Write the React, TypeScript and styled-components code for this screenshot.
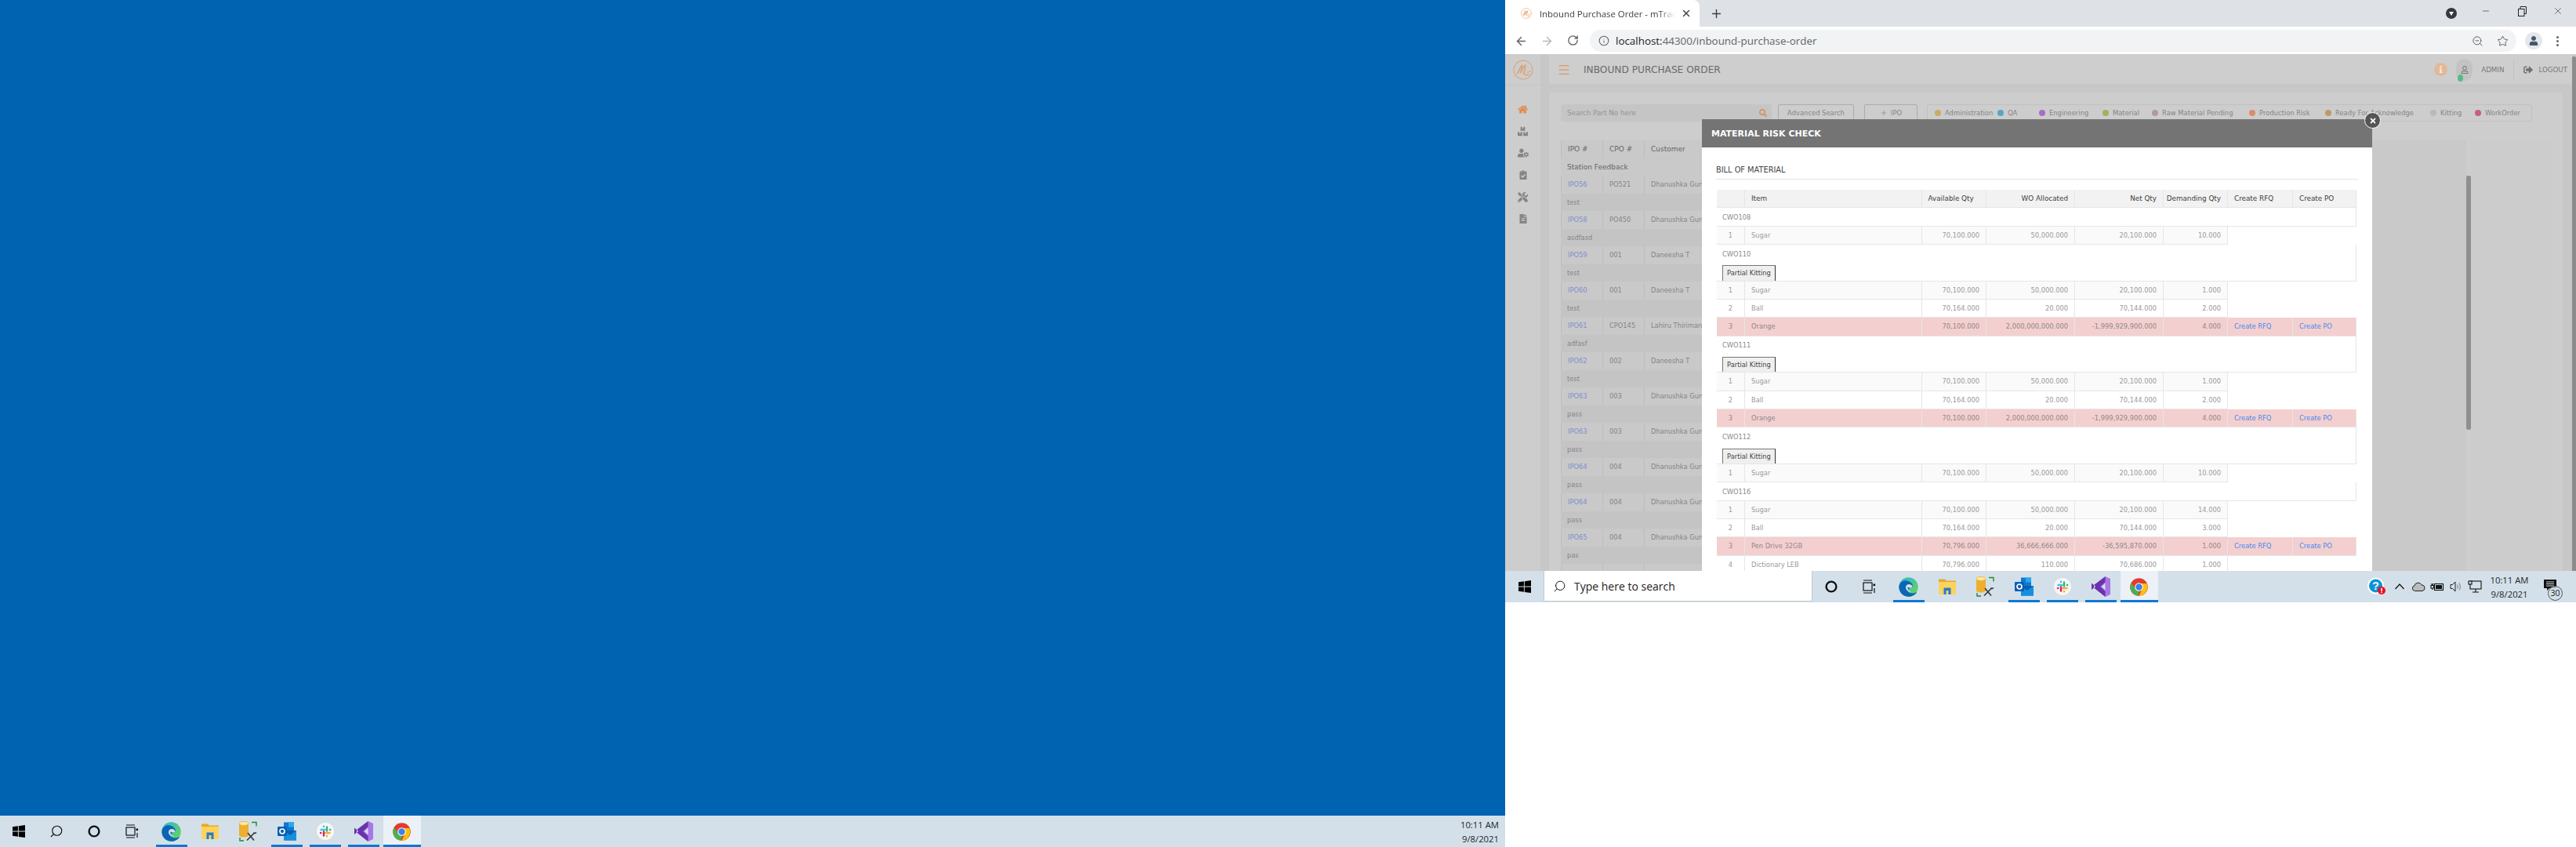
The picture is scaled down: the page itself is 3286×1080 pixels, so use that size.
import React from 'react';
import styled, { createGlobalStyle } from 'styled-components';
import { ArrowLeft, ArrowRight, RotateCw, Info, ZoomOut, Star, Plus, X, Minus, Search, Menu } from 'lucide-react';
import {
    FaHome, FaBoxes, FaUserCog, FaClipboardCheck, FaTools, FaFileAlt,
    FaSearch, FaSignOutAlt, FaRegUser, FaInfo, FaUser, FaTimes,
} from 'react-icons/fa';

const PAGE_FONT = '"DejaVu Sans", Verdana, sans-serif';
const UI_FONT = '"Open Sans", "Noto Sans", sans-serif';

const GlobalStyle = createGlobalStyle`
    html, body {
        margin: 0;
        padding: 0;
        background: #fff;
        overflow: hidden;
    }
    * { box-sizing: border-box; }
`;

const Screen = styled.div`
    display: flex;
    width: 3286px;
    height: 1080px;
    overflow: hidden;
`;

const Desktop = styled.div`
    width: 1920px;
    height: 1080px;
    display: flex;
    flex-direction: column;
    flex: none;
`;

const Wallpaper = styled.div`
    flex: 1;
    background: #0063b1;
`;

const Laptop = styled.div`
    width: 1366px;
    height: 768px;
    display: flex;
    flex-direction: column;
    flex: none;
`;

/* taskbar */
const Taskbar = styled.div`
    height: 40px;
    flex: none;
    display: flex;
    align-items: stretch;
    background: #d3e0ea;
    font-family: ${UI_FONT};
    color: #1a1a1a;
`;

const SystemSlot = styled.div`
    width: 48px;
    flex: none;
    display: flex;
    align-items: center;
    justify-content: center;
`;

const StartSlot = styled(SystemSlot)`
    width: 49px;
`;

const TaskSearch = styled.div`
    width: 343px;
    height: 39px;
    flex: none;
    display: flex;
    align-items: center;
    gap: 10px;
    padding-left: 11px;
    background: #fff;
    border: 1px solid #c4c9cd;
    border-top: 0;
    font-size: 14px;
    color: #222;
`;

const AppSlot = styled.div<{ $active?: boolean; $wide?: boolean }>`
    width: ${p => (p.$wide ? '48px' : '40px')};
    margin: 0 ${p => (p.$wide ? '0.5px' : '4.5px')};
    flex: none;
    display: flex;
    align-items: center;
    justify-content: center;
    border-bottom: 3px solid ${p => (p.$active ? '#0f78d4' : 'transparent')};
    background: ${p => (p.$wide ? '#ebf1f6' : 'transparent')};
    padding-top: 3px;
`;

const AppsStart = styled.div`
    width: 2px;
    flex: none;
`;

const Spring = styled.div`
    flex: 1;
`;

const Tray = styled.div`
    display: flex;
    align-items: center;
    margin-right: 15px;
`;

const TrayIcon = styled.div<{ $gap?: number }>`
    width: 24px;
    height: 24px;
    margin-right: ${p => p.$gap ?? 0}px;
    display: flex;
    align-items: center;
    justify-content: center;
`;

const Clock = styled.div`
    width: 64px;
    display: flex;
    flex-direction: column;
    align-items: center;
    justify-content: center;
    gap: 3px;
    font-size: 11.3px;
    line-height: 15px;
    color: #1f1f1f;
`;

const LeftClock = styled(Clock)`
    margin-right: 8px;
    align-items: flex-end;
`;

const NotifyWrap = styled.div`
    width: 36px;
    position: relative;
    display: flex;
    align-items: center;
    justify-content: center;
    margin-left: 2px;
    padding-bottom: 4px;
`;

const NotifyBadge = styled.span`
    position: absolute;
    left: 15px;
    top: 8px;
    width: 19px;
    height: 19px;
    border-radius: 50%;
    border: 1px solid #555;
    background: #d3e0eacc;
    font-size: 10.5px;
    line-height: 17px;
    text-align: center;
`;

/* chrome */
const TabStrip = styled.div`
    height: 34px;
    flex: none;
    display: flex;
    align-items: center;
    background: #dee1e6;
    font-family: ${UI_FONT};
`;

const Tab = styled.div`
    width: 248px;
    height: 34px;
    flex: none;
    display: flex;
    align-items: center;
    padding: 0 10px 0 20px;
    background: #fff;
    border-top-right-radius: 8px;
`;

const TabTitle = styled.span`
    width: 174px;
    margin-left: 10px;
    font-size: 11.4px;
    color: #3c4043;
    white-space: nowrap;
    overflow: hidden;
    -webkit-mask-image: linear-gradient(90deg, #000 88%, transparent);
    mask-image: linear-gradient(90deg, #000 88%, transparent);
`;

const TabClose = styled.div`
    margin-left: 7px;
    display: flex;
`;

const NewTab = styled.div`
    margin-left: 12.5px;
    display: flex;
`;

const WindowControls = styled.div`
    margin-left: auto;
    display: flex;
    align-items: center;
`;

const Extension = styled.div`
    width: 14px;
    height: 14px;
    border-radius: 50%;
    background: #35393f;
    margin-right: 14px;
    display: flex;
    align-items: center;
    justify-content: center;
`;

const WindowButton = styled.div`
    width: 46px;
    display: flex;
    justify-content: center;
    color: #222;
    margin-top: -6px;
`;

const Toolbar = styled.div`
    height: 36px;
    flex: none;
    display: flex;
    align-items: center;
    background: #fff;
    border-bottom: 1px solid #ccc;
    padding-top: 1px;
    font-family: ${UI_FONT};
`;

const NavIcon = styled.div<{ $muted?: boolean }>`
    width: 33px;
    display: flex;
    justify-content: center;
    color: ${p => (p.$muted ? '#b5b7ba' : '#5f6368')};
`;

const NavGroup = styled.div`
    width: 108px;
    flex: none;
    display: flex;
    padding-left: 4px;
`;

const Omnibox = styled.div`
    width: 1182px;
    height: 28px;
    flex: none;
    display: flex;
    align-items: center;
    padding: 0 10px 0 11px;
    background: #f1f3f4;
    border-radius: 14px;
    font-size: 13.4px;
    color: #202124;
`;

const UrlHost = styled.span`
    margin-left: 8px;
    color: #202124;
`;

const UrlRest = styled.span`
    color: #5f6368;
`;

const OmniActions = styled.div`
    margin-left: auto;
    display: flex;
    gap: 17px;
    color: #5f6368;
`;

const Avatar = styled.div`
    width: 22px;
    height: 22px;
    margin-left: 11px;
    border-radius: 50%;
    background: #e4e7eb;
    color: #47566e;
    display: flex;
    align-items: center;
    justify-content: center;
`;

const DotsMenu = styled.div`
    margin-left: 18px;
    display: flex;
    flex-direction: column;
    gap: 2px;
`;

const Dot = styled.span`
    width: 3px;
    height: 3px;
    border-radius: 50%;
    background: #5f6368;
`;

/* app page, dimmed by the modal */
const Page = styled.div`
    flex: 1;
    min-height: 0;
    position: relative;
    display: flex;
    background: #c7c7c7;
    font-family: ${PAGE_FONT};
    overflow: hidden;
`;

const Rail = styled.div`
    width: 45px;
    flex: none;
    display: flex;
    flex-direction: column;
    align-items: center;
    background: #cdcdcd;
`;

const RailLogo = styled.div`
    width: 100%;
    height: 39px;
    display: flex;
    align-items: center;
    justify-content: center;
    border-bottom: 1px solid #c5c5c5;
`;

const RailIcons = styled.div`
    display: flex;
    flex-direction: column;
    align-items: center;
    gap: 15.5px;
    margin-top: 24px;
    color: #888;
`;

const RailIcon = styled.div<{ $active?: boolean }>`
    height: 12.5px;
    display: flex;
    align-items: center;
    color: ${p => (p.$active ? '#df8a4e' : '#858585')};
`;

const Content = styled.div`
    width: 1305px;
    margin-left: 11px;
    flex: none;
    display: flex;
    flex-direction: column;
    gap: 11px;
`;

const AppBar = styled.div`
    height: 37px;
    flex: none;
    display: flex;
    align-items: center;
    padding: 0 6px 0 10px;
    background: #cecece;
    border-radius: 0 0 3px 3px;
    width: 1305px;
`;

const Burger = styled.div`
    display: flex;
    color: #df8a4e;
`;

const AppTitle = styled.div`
    margin-left: 16px;
    font-size: 12.2px;
    color: #6a6a6a;
`;

const AppBarRight = styled.div`
    margin-left: auto;
    display: flex;
    align-items: center;
`;

const InfoBadge = styled.div`
    width: 17px;
    height: 17px;
    border-radius: 50%;
    background: #e2b997;
    color: #f4eee8;
    display: flex;
    align-items: center;
    justify-content: center;
`;

const UserBadge = styled.div`
    width: 21px;
    height: 28px;
    margin-left: 11px;
    border-radius: 11px;
    background: #c3c3c3;
    color: #737373;
    position: relative;
    display: flex;
    align-items: center;
    justify-content: center;
`;

const OnlineDot = styled.span`
    position: absolute;
    left: 2px;
    bottom: -1px;
    width: 7px;
    height: 9px;
    border-radius: 50%;
    background: #55bb85;
`;

const BarLabel = styled.span`
    font-size: 8.7px;
    color: #787878;
`;

const AdminLabel = styled(BarLabel)`
    margin-left: 11px;
`;

const BarDivider = styled.div`
    width: 1px;
    height: 28px;
    margin: 0 12px;
    background: #c2c2c2;
`;

const LogoutIcon = styled.div`
    display: flex;
    margin-right: 7px;
    color: #727272;
`;

const Card = styled.div`
    flex: 1;
    min-height: 0;
    display: flex;
    flex-direction: column;
    padding: 15px 12px 0 15px;
    background: #cdcdcd;
    margin-right: 12px;
    border-radius: 3px 3px 0 0;
`;

const PageScroll = styled.div`
    width: 5px;
    margin: 2px 0 0 auto;
    flex: none;
    background: #8c8c8c;
    border-radius: 2px 2px 0 0;
`;

const FilterRow = styled.div`
    height: 22px;
    flex: none;
    display: flex;
    gap: 8px;
    font-size: 8.4px;
    color: #858585;
`;

const SearchField = styled.div`
    width: 269px;
    display: flex;
    align-items: center;
    justify-content: space-between;
    padding: 0 6px 0 8px;
    background: #c5c5c5;
    border-radius: 3px;
    color: #949494;
    font-size: 8.8px;
`;

const SearchGlyph = styled.span`
    display: flex;
    color: #dc8d55;
`;

const OutlineButton = styled.div<{ $width: number; $gap: number }>`
    width: ${p => p.$width}px;
    margin-left: ${p => p.$gap}px;
    display: flex;
    align-items: center;
    justify-content: center;
    gap: 4px;
    border: 1px solid #ababab;
    border-radius: 2px;
`;

const Legend = styled.div`
    width: 772px;
    margin-left: 4px;
    display: flex;
    align-items: center;
    padding-left: 9px;
    border: 1px solid #c0c0c0;
    border-radius: 3px;
    white-space: nowrap;
`;

const LegendItem = styled.div<{ $width: number }>`
    width: ${p => p.$width}px;
    flex: none;
    display: flex;
    align-items: center;
    gap: 5px;
`;

const LegendDot = styled.span<{ $color: string }>`
    width: 8px;
    height: 8px;
    border-radius: 50%;
    background: ${p => p.$color};
`;

const TableFrame = styled.div`
    flex: 1;
    min-height: 0;
    margin-top: 24px;
    display: flex;
`;

const TableArea = styled.div`
    width: 1155px;
    flex: none;
    display: flex;
    flex-direction: column;
    overflow: hidden;
    background: #c9c9c9;
    font-size: 8.3px;
`;

const ThumbTrack = styled.div`
    width: 6px;
    flex: none;
    padding-top: 45px;
`;

const Thumb = styled.div`
    height: 324px;
    border-radius: 2px;
    background: #8f8f8f;
`;

const SidePane = styled.div`
    width: 105px;
    flex: none;
    background: #cccccc;
`;

const PoLine = styled.div<{ $head?: boolean; $dark?: boolean }>`
    display: flex;
    flex: none;
    align-items: center;
    width: 400px;
    height: 22.5px;
    background: ${p => (p.$dark ? '#c4c4c4' : '#c9c9c9')};
    color: ${p => (p.$head ? '#666' : '#858585')};
    font-size: ${p => (p.$head ? '9px' : '8.3px')};
`;

const PoCell = styled.div<{ $width: number; $link?: boolean }>`
    width: ${p => p.$width}px;
    height: 100%;
    flex: none;
    display: flex;
    align-items: center;
    padding-left: 8px;
    border-left: 1px solid #bdbdbd;
    white-space: nowrap;
    overflow: hidden;
    color: ${p => (p.$link ? '#7d90cc' : 'inherit')};
`;

const PoNote = styled.div`
    padding-left: 8px;
`;

/* modal */
const Modal = styled.div`
    position: absolute;
    left: 251px;
    top: 82px;
    bottom: 0;
    width: 855px;
    display: flex;
    flex-direction: column;
    background: #fff;
`;

const ModalHead = styled.div`
    height: 36px;
    flex: none;
    display: flex;
    align-items: center;
    padding-left: 12px;
    background: #747474;
    color: #fff;
    font-size: 11px;
    font-weight: 700;
`;

const ModalClose = styled.div`
    position: absolute;
    right: -11px;
    top: -9px;
    width: 21px;
    height: 21px;
    border-radius: 50%;
    border: 1.5px solid #fff;
    background: #555;
    color: #fff;
    display: flex;
    align-items: center;
    justify-content: center;
`;

const ModalBody = styled.div`
    flex: 1;
    min-height: 0;
    overflow: hidden;
    padding: 17px 18px 0;
`;

const SectionTitle = styled.div`
    height: 24px;
    margin-bottom: 13px;
    display: flex;
    align-items: center;
    border-bottom: 1px solid #e4e4e4;
    font-size: 9.8px;
    color: #444;
`;

const BomGrid = styled.div`
    margin-left: 1px;
    width: 816px;
`;

const BomRow = styled.div`
    display: grid;
    grid-template-columns: 36px 225.5px 82.5px 113px 113px 82px 83px 81px;
    height: 23.33px;
`;

const BomCell = styled.div<{ $right?: boolean; $center?: boolean; $head?: boolean; $pink?: boolean; $odd?: boolean }>`
    display: flex;
    align-items: center;
    justify-content: ${p => (p.$center ? 'center' : p.$right ? 'flex-end' : 'flex-start')};
    padding: 0 8px;
    font-size: ${p => (p.$head ? '8.8px' : '8.3px')};
    white-space: nowrap;
    border-right: 1px solid #e6e6e6;
    border-bottom: 1px solid #e6e6e6;
    color: ${p => (p.$head ? '#3d3d3d' : p.$pink ? '#8f8a8a' : '#9a9a9a')};
    background: ${p => (p.$head ? '#f2f2f2' : p.$pink ? '#f4cfcf' : p.$odd ? '#fafafa' : '#fff')};
`;

const BomLink = styled(BomCell)`
    color: #3f8cf0;
`;

const GroupRow = styled.div<{ $kitting?: boolean }>`
    height: ${p => (p.$kitting ? '46.67px' : '23.33px')};
    overflow: hidden;
    padding-left: 7px;
    border-right: 1px solid #e6e6e6;
    border-bottom: 1px solid #e6e6e6;
    color: #8a8a8a;
    font-size: 8.3px;
`;

const GroupName = styled.div`
    height: 23.33px;
    display: flex;
    align-items: center;
`;

const KittingButton = styled.button`
    display: block;
    width: 68px;
    height: 24px;
    margin-top: 3px;
    padding: 0 0 4px;
    background: #efefef;
    border: 1px solid #555;
    border-left-color: #777;
    border-top-color: #777;
    border-right: 1.5px solid #333;
    color: #444;
    font-family: ${PAGE_FONT};
    font-size: 8.3px;
`;

/* icons */
const WinLogo = ({ size = 16 }: { size?: number }) => (
    <svg width={size} height={size} viewBox="0 0 16 16">
        <path fill="#000" d="M0 2.3 6.9 1.3V7.6H0zM7.8 1.2 16 0V7.6H7.8zM0 8.4H6.9V14.8L0 13.8zM7.8 8.4H16V16L7.8 14.9z" />
    </svg>
);

const CortanaRing = () => (
    <svg width="16" height="16" viewBox="0 0 16 16">
        <circle cx="8" cy="8" r="6.4" fill="none" stroke="#111" strokeWidth="2.4" />
    </svg>
);

const TaskView = () => (
    <svg width="18" height="18" viewBox="0 0 18 18" fill="none" stroke="#111" strokeWidth="1.2">
        <path d="M2 1h11M2 17h11" />
        <rect x="2" y="4" width="11" height="10" />
        <rect x="14.5" y="5.5" width="2.6" height="2.6" fill="#111" stroke="none" />
        <path d="M16 11v6" />
    </svg>
);

const EdgeIcon = () => (
    <svg width="25" height="25" viewBox="0 0 25 25">
        <defs>
            <linearGradient id="edgeTop" x1="0" y1="0" x2="1" y2="1">
                <stop offset="0" stopColor="#2bb7d6" />
                <stop offset="1" stopColor="#6fd64f" />
            </linearGradient>
        </defs>
        <circle cx="12.5" cy="12.5" r="12.2" fill="url(#edgeTop)" />
        <path fill="#0b65b5" d="M.4 12.5C1 5.500 7 3.500 11 4.500 17 6 19 11 17.500 13c-2 1-6 1-6.500-.5 4.500 1 1 5 .5 5.500 2 3 8 3.500 12 .5-2 4-6.500 6.300-11 6.300C6 24.800.4 19.500.4 12.500z" />
        <path fill="#d3e0ea" d="M9 13c0-2.500 2-4 4-4 2.500 0 4.500 1.500 4.500 3.500 0 1-3 1.500-6 0-.5 2 1 5 5 6-4 .5-7.500-2-7.500-5.500z" />
    </svg>
);

const FolderIcon = () => (
    <svg width="22" height="20" viewBox="0 0 22 20">
        <path fill="#e8a828" d="M0 1.500A1 1 0 0 1 1 .5h7l2 2h12v3H0z" />
        <path fill="#fbd35e" d="M0 4h22v15a1 1 0 0 1-1 1H1a1 1 0 0 1-1-1z" />
        <path fill="#2b7cc8" d="M6.500 20v-8.500h9V20h-3v-5h-3v5z" />
    </svg>
);

const SqlToolIcon = () => (
    <svg width="24" height="26" viewBox="0 0 24 26" fill="none">
        <path fill="#eeaf2e" d="M0 3v15c0 1.500 2 2.500 6 2.500s6-1 6-2.500V3z" />
        <ellipse cx="6" cy="3" rx="6" ry="2.600" fill="#fce8a6" stroke="#eeaf2e" strokeWidth=".8" />
        <path stroke="#1e8b2c" strokeWidth="1.400" d="M16 1.500h6v5M1 21v4h5" />
        <path stroke="#333" strokeWidth="1.600" d="M10 24.500l9-9M11 15l8 9.500M18.500 14.500c1 1 2.500 1 3.500 0" />
    </svg>
);

const OutlookIcon = () => (
    <svg width="24" height="24" viewBox="0 0 24 24">
        <rect x="8" y="0.500" width="13" height="11" fill="#0f78d4" />
        <rect x="14" y="0.500" width="7" height="6" fill="#28a8ea" />
        <path fill="#0a5fb0" d="M8 11h16v12.500H8z" />
        <path fill="#1490df" d="M8 11l8 6 8-6v12.500H8z" />
        <rect x="0" y="6" width="12" height="12" rx="1" fill="#0a60b4" />
        <circle cx="6" cy="12" r="3" fill="none" stroke="#fff" strokeWidth="1.700" />
    </svg>
);

const SlackIcon = () => (
    <svg width="24" height="24" viewBox="0 0 24 24">
        <circle cx="12" cy="12" r="11.600" fill="#f6f6f6" stroke="#cbd0d4" strokeWidth=".6" />
        <g strokeWidth="2.400" strokeLinecap="round" fill="none">
            <path stroke="#36c5f0" d="M6.500 10h5M10 5.800V6" />
            <path stroke="#2eb67d" d="M14 6.500v5M18 10h.2" />
            <path stroke="#ecb22e" d="M12.500 14h5M14 18v.2" />
            <path stroke="#e01e5a" d="M10 12.500v5M6 14h.2" />
        </g>
    </svg>
);

const VsIcon = () => (
    <svg width="24" height="26" viewBox="0 0 24 26">
        <path fill="#a876e6" d="M17.500 0 24 3v20l-6.500 3L7 14.500z" />
        <path fill="#6a32ae" d="M17.500 0v7L11 13l6.500 6v7L3 14.500 0 17V8.500l3 2.500z" />
        <path fill="#d3e0ea" d="M17.500 8.500v9L12.800 13zM3 10.800V15l2-2.100z" />
    </svg>
);

const ChromeIcon = () => (
    <svg width="23" height="23" viewBox="0 0 48 48">
        <circle cx="24" cy="24" r="23.500" fill="#e33b2e" />
        <path fill="#4caf50" d="M24 47.500A23.500 23.500 0 0 1 3.600 12.300L15 29l9 18.500z" />
        <path fill="#4caf50" d="M3.600 12.300 17 33l10 1-8 13z" />
        <path fill="#ffc107" d="M24 14.500h20.400A23.500 23.500 0 0 1 24 47.500L33 29z" />
        <circle cx="24" cy="24" r="11" fill="#fff" />
        <circle cx="24" cy="24" r="8.800" fill="#3f7fe8" />
    </svg>
);

const MtrackLogo = ({ size, tone }: { size: number; tone: string }) => (
    <svg width={size} height={size} viewBox="0 0 24 24" fill="none" stroke={tone}>
        <circle cx="12" cy="12" r="11" strokeWidth="1" />
        <path strokeWidth="1.500" d="M5 17C7.500 12 9 8 10.500 6.500c.8 2-1 6-2 9.500 2-4 4.500-8.500 6-9.500.8 2-1 6-2 9.500 1 2 3 2.500 6.500 1.500" />
        <path strokeWidth="1" d="M16 14.500c1.500.5 3.500 0 5-1.500" />
    </svg>
);

const TrayHelp = () => (
    <svg width="24" height="24" viewBox="0 0 24 24">
        <circle cx="10.500" cy="11" r="10.500" fill="#fff" />
        <circle cx="10.500" cy="11" r="8.500" fill="#0d93d9" />
        <text x="10.500" y="16" fontSize="14" fontWeight="700" fill="#fff" textAnchor="middle" fontFamily="Liberation Sans, sans-serif">?</text>
        <circle cx="18" cy="17" r="5" fill="#e81123" />
        <rect x="17.200" y="13.800" width="1.600" height="4" fill="#fff" />
        <rect x="17.200" y="18.600" width="1.600" height="1.500" fill="#fff" />
    </svg>
);

const TrayCaret = () => (
    <svg width="14" height="10" viewBox="0 0 14 10" fill="none" stroke="#111" strokeWidth="1.200">
        <path d="M1.500 8 7 2l5.500 6" />
    </svg>
);

const TrayCloud = () => (
    <svg width="18" height="14" viewBox="0 0 18 14">
        <path fill="#bcbcbc" stroke="#222" strokeWidth="1" d="M4.500 12.500a3.400 3.400 0 0 1-.5-6.700 4.800 4.800 0 0 1 9-1 3.900 3.900 0 0 1 1 7.700z" />
    </svg>
);

const TrayPower = () => (
    <svg width="18" height="14" viewBox="0 0 18 14" fill="none" stroke="#111" strokeWidth="1.100">
        <path d="M1 5.500h3.500v3.500H1zM2 5.500V3M3.500 5.500V3M2.700 9v2" />
        <rect x="5.500" y="3.500" width="11" height="8" />
        <rect x="7" y="5" width="8" height="5" fill="#111" stroke="none" />
    </svg>
);

const TraySound = () => (
    <svg width="16" height="16" viewBox="0 0 16 16" fill="none" stroke="#222" strokeWidth="1">
        <path d="M1 5.500h2.500L7 2v12l-3.500-3.500H1z" />
        <path stroke="#777" d="M9.500 5.500c1 1.500 1 3.500 0 5M12 3.500c1.700 2.500 1.700 6.500 0 9" />
    </svg>
);

const TrayNetwork = () => (
    <svg width="18" height="16" viewBox="0 0 18 16" fill="none" stroke="#111" strokeWidth="1.100">
        <rect x="3" y="1" width="14" height="10" />
        <rect x="1" y="1" width="4" height="4" fill="#d3e0ea" />
        <path d="M10 11v3.500M6 15h8" />
    </svg>
);

const NotifyIcon = () => (
    <svg width="16" height="14" viewBox="0 0 16 14">
        <path fill="#111" d="M0 0h16v11H7l-3 3v-3H0z" />
        <path stroke="#d3e0ea" strokeWidth="1" d="M3 3h10M3 5.500h10M3 8h10" />
    </svg>
);

/* data */
const LEGEND = [
    { label: 'Administration', color: '#c8ac66', width: 80 },
    { label: 'QA', color: '#55a5c6', width: 53 },
    { label: 'Engineering', color: '#a96dc4', width: 81 },
    { label: 'Material', color: '#9cb45a', width: 63 },
    { label: 'Raw Material Pending', color: '#b09a9a', width: 124 },
    { label: 'Production Risk', color: '#dc8a6c', width: 97 },
    { label: 'Ready For Acknowledge', color: '#c0996a', width: 134 },
    { label: 'Kitting', color: '#b9b9b9', width: 57 },
    { label: 'WorkOrder', color: '#c65f80', width: 70 },
];

const ORDERS = [
    ['IPO56', 'PO521', 'Dhanushka Gunasekara', 'test'],
    ['IPO58', 'PO450', 'Dhanushka Gunasekara', 'asdfasd'],
    ['IPO59', '001', 'Daneesha T', 'test'],
    ['IPO60', '001', 'Daneesha T', 'test'],
    ['IPO61', 'CPO145', 'Lahiru Thirimanne', 'adfasf'],
    ['IPO62', '002', 'Daneesha T', 'test'],
    ['IPO63', '003', 'Dhanushka Gunasekara', 'pass'],
    ['IPO63', '003', 'Dhanushka Gunasekara', 'pass'],
    ['IPO64', '004', 'Dhanushka Gunasekara', 'pass'],
    ['IPO64', '004', 'Dhanushka Gunasekara', 'pass'],
    ['IPO65', '004', 'Dhanushka Gunasekara', 'pas'],
    ['', '', '', ''],
];

type Line = [string, string, string, string, string, boolean?];
interface Group {
    name: string;
    kitting?: boolean;
    lines: Line[];
}

const SUGAR = (demand: string): Line => ['Sugar', '70,100.000', '50,000.000', '20,100.000', demand];
const BALL = (demand: string): Line => ['Ball', '70,164.000', '20.000', '70,144.000', demand];
const ORANGE: Line = ['Orange', '70,100.000', '2,000,000,000.000', '-1,999,929,900.000', '4.000', true];

const GROUPS: Group[] = [
    { name: 'CWO108', lines: [SUGAR('10.000')] },
    { name: 'CWO110', kitting: true, lines: [SUGAR('1.000'), BALL('2.000'), ORANGE] },
    { name: 'CWO111', kitting: true, lines: [SUGAR('1.000'), BALL('2.000'), ORANGE] },
    { name: 'CWO112', kitting: true, lines: [SUGAR('10.000')] },
    {
        name: 'CWO116',
        lines: [
            SUGAR('14.000'),
            BALL('3.000'),
            ['Pen Drive 32GB', '70,796.000', '36,666,666.000', '-36,595,870.000', '1.000', true],
            ['Dictionary LEB', '70,796.000', '110.000', '70,686.000', '1.000'],
        ],
    },
];

const APPS = [
    { key: 'edge', icon: <EdgeIcon />, active: true },
    { key: 'folder', icon: <FolderIcon /> },
    { key: 'sql', icon: <SqlToolIcon /> },
    { key: 'outlook', icon: <OutlookIcon />, active: true },
    { key: 'slack', icon: <SlackIcon />, active: true },
    { key: 'vs', icon: <VsIcon />, active: true },
];

const TaskApps = () => (
    <>
        <AppsStart />
        {APPS.map(a => (
            <AppSlot key={a.key} $active={a.active}>{a.icon}</AppSlot>
        ))}
        <AppSlot $active $wide><ChromeIcon /></AppSlot>
    </>
);

const BomLineRow = ({ line, index }: { line: Line; index: number }) => {
    const [item, available, allocated, net, demand, risk] = line;
    const odd = index % 2 === 0;
    return (
        <BomRow>
            <BomCell $center $pink={risk} $odd={odd}>{index + 1}</BomCell>
            <BomCell $pink={risk} $odd={odd}>{item}</BomCell>
            <BomCell $right $pink={risk} $odd={odd}>{available}</BomCell>
            <BomCell $right $pink={risk} $odd={odd}>{allocated}</BomCell>
            <BomCell $right $pink={risk} $odd={odd}>{net}</BomCell>
            <BomCell $right $pink={risk} $odd={odd}>{demand}</BomCell>
            {risk && <BomLink $pink>Create RFQ</BomLink>}
            {risk && <BomLink $pink>Create PO</BomLink>}
        </BomRow>
    );
};

export default function App() {
    return (
        <Screen>
            <GlobalStyle />
            <Desktop>
                <Wallpaper />
                <Taskbar>
                    <SystemSlot><WinLogo /></SystemSlot>
                    <SystemSlot><Search size={18} color="#111" strokeWidth={1.5} style={{ transform: 'scaleX(-1)' }} /></SystemSlot>
                    <SystemSlot><CortanaRing /></SystemSlot>
                    <SystemSlot><TaskView /></SystemSlot>
                    <TaskApps />
                    <Spring />
                    <LeftClock>
                        <span>10:11 AM</span>
                        <span>9/8/2021</span>
                    </LeftClock>
                </Taskbar>
            </Desktop>

            <Laptop>
                <TabStrip>
                    <Tab>
                        <MtrackLogo size={14} tone="#e59a5c" />
                        <TabTitle>Inbound Purchase Order - mTrack</TabTitle>
                        <TabClose><X size={14} color="#3c4043" strokeWidth={2.5} /></TabClose>
                    </Tab>
                    <NewTab><Plus size={17} color="#3c4043" strokeWidth={2} /></NewTab>
                    <WindowControls>
                        <Extension>
                            <svg width="6" height="5" viewBox="0 0 6 5"><path fill="#fff" d="M0 0h6L3 5z" /></svg>
                        </Extension>
                        <WindowButton><Minus size={12} strokeWidth={1.2} /></WindowButton>
                        <WindowButton>
                            <svg width="11" height="13" viewBox="0 0 11 13" fill="none" stroke="#222">
                                <rect x=".5" y="3.500" width="7.500" height="9" />
                                <path d="M3 3.500V.5h7.500v9H8" />
                            </svg>
                        </WindowButton>
                        <WindowButton><X size={14} strokeWidth={1} /></WindowButton>
                    </WindowControls>
                </TabStrip>
                <Toolbar>
                    <NavGroup>
                        <NavIcon><ArrowLeft size={17} strokeWidth={2} /></NavIcon>
                        <NavIcon $muted><ArrowRight size={17} strokeWidth={2} /></NavIcon>
                        <NavIcon><RotateCw size={15} strokeWidth={2.2} /></NavIcon>
                    </NavGroup>
                    <Omnibox>
                        <Info size={14} color="#5f6368" strokeWidth={1.8} />
                        <UrlHost>localhost:<UrlRest>44300/inbound-purchase-order</UrlRest></UrlHost>
                        <OmniActions>
                            <ZoomOut size={15} strokeWidth={1.6} />
                            <Star size={15} strokeWidth={1.6} />
                        </OmniActions>
                    </Omnibox>
                    <Avatar><FaUser size={12} /></Avatar>
                    <DotsMenu><Dot /><Dot /><Dot /></DotsMenu>
                </Toolbar>

                <Page>
                    <Rail>
                        <RailLogo><MtrackLogo size={26} tone="#dba57a" /></RailLogo>
                        <RailIcons>
                            <RailIcon $active><FaHome size={13} /></RailIcon>
                            <RailIcon><FaBoxes size={13} /></RailIcon>
                            <RailIcon><FaUserCog size={14} /></RailIcon>
                            <RailIcon><FaClipboardCheck size={12} /></RailIcon>
                            <RailIcon><FaTools size={13} /></RailIcon>
                            <RailIcon><FaFileAlt size={12} /></RailIcon>
                        </RailIcons>
                    </Rail>
                    <Content>
                        <AppBar>
                            <Burger><Menu size={18} strokeWidth={1.5} /></Burger>
                            <AppTitle>INBOUND PURCHASE ORDER</AppTitle>
                            <AppBarRight>
                                <InfoBadge><FaInfo size={9} /></InfoBadge>
                                <UserBadge>
                                    <FaRegUser size={10} />
                                    <OnlineDot />
                                </UserBadge>
                                <AdminLabel>ADMIN</AdminLabel>
                                <BarDivider />
                                <LogoutIcon><FaSignOutAlt size={12} /></LogoutIcon>
                                <BarLabel>LOGOUT</BarLabel>
                            </AppBarRight>
                        </AppBar>
                        <Card>
                            <FilterRow>
                                <SearchField>
                                    <span>Search Part No here</span>
                                    <SearchGlyph><FaSearch size={10} /></SearchGlyph>
                                </SearchField>
                                <OutlineButton $width={97} $gap={0}>Advanced Search</OutlineButton>
                                <OutlineButton $width={68} $gap={5}><Plus size={10} strokeWidth={1.5} /> IPO</OutlineButton>
                                <Legend>
                                    {LEGEND.map(item => (
                                        <LegendItem key={item.label} $width={item.width}>
                                            <LegendDot $color={item.color} />
                                            {item.label}
                                        </LegendItem>
                                    ))}
                                </Legend>
                            </FilterRow>
                            <TableFrame>
                                <TableArea>
                                    <PoLine $head>
                                        <PoCell $width={53}>IPO #</PoCell>
                                        <PoCell $width={53}>CPO #</PoCell>
                                        <PoCell $width={120}>Customer</PoCell>
                                    </PoLine>
                                    <PoLine $head>
                                        <PoNote>Station Feedback</PoNote>
                                    </PoLine>
                                    {ORDERS.map((o, i) => (
                                        <React.Fragment key={i}>
                                            <PoLine>
                                                <PoCell $width={53} $link>{o[0]}</PoCell>
                                                <PoCell $width={53}>{o[1]}</PoCell>
                                                <PoCell $width={120}>{o[2]}</PoCell>
                                            </PoLine>
                                            <PoLine $dark>
                                                <PoNote>{o[3]}</PoNote>
                                            </PoLine>
                                        </React.Fragment>
                                    ))}
                                </TableArea>
                                <ThumbTrack><Thumb /></ThumbTrack>
                                <SidePane />
                            </TableFrame>
                        </Card>
                    </Content>
                    <PageScroll />

                    <Modal>
                        <ModalClose><FaTimes size={10} /></ModalClose>
                        <ModalHead>MATERIAL RISK CHECK</ModalHead>
                        <ModalBody>
                            <SectionTitle>BILL OF MATERIAL</SectionTitle>
                            <BomGrid>
                                <BomRow>
                                    <BomCell $head />
                                    <BomCell $head>Item</BomCell>
                                    <BomCell $head>Available Qty</BomCell>
                                    <BomCell $head $right>WO Allocated</BomCell>
                                    <BomCell $head $right>Net Qty</BomCell>
                                    <BomCell $head $right>Demanding Qty</BomCell>
                                    <BomCell $head>Create RFQ</BomCell>
                                    <BomCell $head>Create PO</BomCell>
                                </BomRow>
                                {GROUPS.map(group => (
                                    <React.Fragment key={group.name}>
                                        <GroupRow $kitting={group.kitting}>
                                            <GroupName>{group.name}</GroupName>
                                            {group.kitting && <KittingButton>Partial Kitting</KittingButton>}
                                        </GroupRow>
                                        {group.lines.map((line, i) => (
                                            <BomLineRow key={i} line={line} index={i} />
                                        ))}
                                    </React.Fragment>
                                ))}
                            </BomGrid>
                        </ModalBody>
                    </Modal>
                </Page>

                <Taskbar>
                    <StartSlot><WinLogo /></StartSlot>
                    <TaskSearch>
                        <Search size={17} color="#111" strokeWidth={1.4} style={{ transform: 'scaleX(-1)' }} />
                        Type here to search
                    </TaskSearch>
                    <SystemSlot><CortanaRing /></SystemSlot>
                    <SystemSlot><TaskView /></SystemSlot>
                    <TaskApps />
                    <Spring />
                    <Tray>
                        <TrayIcon $gap={5}><TrayHelp /></TrayIcon>
                        <TrayIcon><TrayCaret /></TrayIcon>
                        <TrayIcon><TrayCloud /></TrayIcon>
                        <TrayIcon><TrayPower /></TrayIcon>
                        <TrayIcon><TraySound /></TrayIcon>
                        <TrayIcon><TrayNetwork /></TrayIcon>
                        <Clock>
                            <span>10:11 AM</span>
                            <span>9/8/2021</span>
                        </Clock>
                        <NotifyWrap>
                            <NotifyIcon />
                            <NotifyBadge>30</NotifyBadge>
                        </NotifyWrap>
                    </Tray>
                </Taskbar>
            </Laptop>
        </Screen>
    );
}
